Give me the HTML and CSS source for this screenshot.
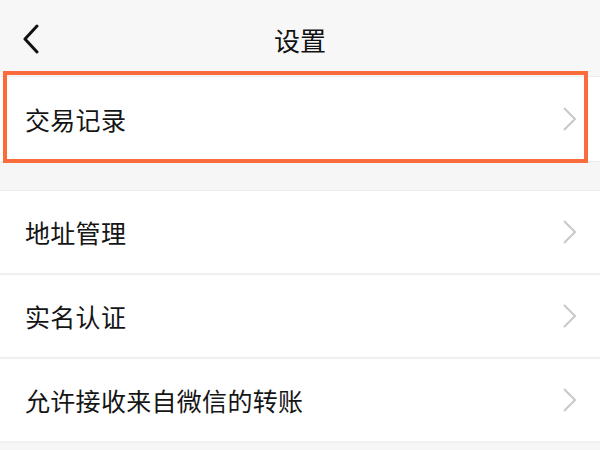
FILE: index.html
```html
<!DOCTYPE html>
<html lang="zh-CN">
<head>
<meta charset="utf-8">
<link rel="stylesheet" href="styles.css">
</head>
<body>
<header class="topbar">
  <svg class="back" width="20" height="30" viewBox="0 0 20 30"><path d="M15 2 L3 15 L15 28" fill="none" stroke="#111" stroke-width="3" stroke-linecap="round" stroke-linejoin="round"/></svg>
  <h1 class="title">设置</h1>
</header>
<section class="group">
  <div class="row highlighted">
    <span class="label">交易记录</span>
    <svg class="arrow" width="16" height="24" viewBox="0 0 16 24"><path d="M2 1 L13 12 L2 23" fill="none" stroke="#c8c8c8" stroke-width="2"/></svg>
    <div class="mark"></div>
  </div>
</section>
<section class="group second">
  <div class="row">
    <span class="label">地址管理</span>
    <svg class="arrow" width="16" height="24" viewBox="0 0 16 24"><path d="M2 1 L13 12 L2 23" fill="none" stroke="#c8c8c8" stroke-width="2"/></svg>
  </div>
  <div class="row">
    <span class="label">实名认证</span>
    <svg class="arrow" width="16" height="24" viewBox="0 0 16 24"><path d="M2 1 L13 12 L2 23" fill="none" stroke="#c8c8c8" stroke-width="2"/></svg>
  </div>
  <div class="row">
    <span class="label">允许接收来自微信的转账</span>
    <svg class="arrow" width="16" height="24" viewBox="0 0 16 24"><path d="M2 1 L13 12 L2 23" fill="none" stroke="#c8c8c8" stroke-width="2"/></svg>
  </div>
</section>
</body>
</html>
```
FILE: styles.css
```css
html, body {
  margin: 0;
  padding: 0;
}
body {
  width: 600px;
  height: 450px;
  overflow: hidden;
  background: #f6f6f7;
  font-family: "Noto Sans CJK SC", "Noto Sans", sans-serif;
  color: #151515;
}
.topbar {
  height: 76px;
  background: #f7f7f8;
  display: flex;
  align-items: center;
  position: relative;
  box-sizing: border-box;
}
.back {
  margin-left: 22px;
  margin-top: 2px;
}
.title {
  position: absolute;
  left: 0;
  right: 0;
  top: 21px;
  margin: 0;
  text-align: center;
  font-size: 26px;
  font-weight: 400;
  line-height: 38px;
  color: #111;
}
.group {
  background: #fff;
  border-top: 1px solid #ececec;
  border-bottom: 1px solid #ececec;
}
.group.second {
  margin-top: 28px;
  border-bottom: none;
}
.row {
  height: 84px;
  display: flex;
  align-items: center;
  justify-content: space-between;
  padding: 0 22px 0 25px;
  box-sizing: border-box;
  position: relative;
}
.second .row {
  height: 84px;
  border-bottom: 2px solid #f0f0f0;
}
.label {
  font-size: 25px;
  line-height: 34px;
  letter-spacing: 0.3px;
}
.arrow {
  margin-right: 0;
}
.mark {
  position: absolute;
  left: 3px;
  right: 12px;
  top: -6px;
  bottom: -2px;
  border: 4px solid #fa6c3c;
  pointer-events: none;
}
```
